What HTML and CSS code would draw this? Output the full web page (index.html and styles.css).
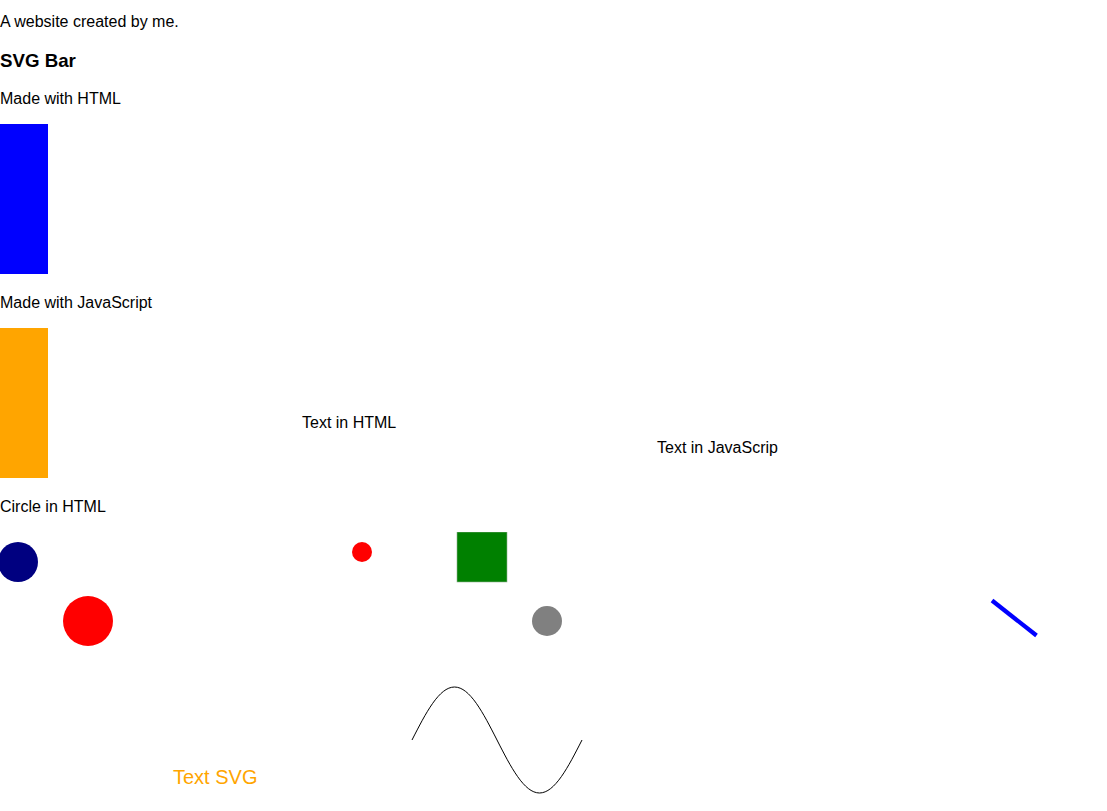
FILE: index.html
```html
<!DOCTYPE html>
<html>
<head>
<meta charset="utf-8">
<title>SVG Bar</title>
<link rel="stylesheet" href="styles.css">
</head>
<body>
<p class="intro">A website created by me.</p>
<h3 class="title">SVG Bar</h3>
<p class="label">Made with HTML</p>
<div class="bar-row">
  <svg class="bar" width="300" height="150" viewBox="0 0 300 150"><rect x="0" y="0" width="48" height="150" fill="blue"/></svg>
</div>
<p class="label">Made with JavaScript</p>
<div class="bar-row">
  <svg class="bar-wide" width="800" height="150" viewBox="0 0 800 150">
    <rect x="0" y="0" width="48" height="150" fill="orange"/>
    <text x="302" y="100" class="svg-label">Text in HTML</text>
    <text x="657" y="125" class="svg-label">Text in JavaScrip</text>
  </svg>
</div>
<p class="label">Circle in HTML</p>
<svg class="canvas" width="1107" height="279" viewBox="0 0 1107 279">
  <circle cx="18" cy="30" r="20" fill="navy"/>
  <circle cx="88" cy="89" r="25" fill="red"/>
  <circle cx="362" cy="20" r="10" fill="red"/>
  <rect x="457" y="0" width="50" height="50" fill="green" stroke="#8fb08f" stroke-width="0.6"/>
  <circle cx="547" cy="89" r="15" fill="gray"/>
  <line x1="992" y1="68.5" x2="1036.5" y2="103.5" stroke="blue" stroke-width="4.3"/>
  <path d="M412 208 C425.86 180.85 439.14 155 454.5 155 C469.86 155 483.14 180.85 497 208 C510.86 235.15 524.14 261 539.5 261 C554.86 261 568.14 235.15 582 208" fill="none" stroke="black" stroke-width="1"/>
  <text x="173" y="252" class="svg-orange">Text SVG</text>
</svg>
</body>
</html>
```

FILE: styles.css
```css
html, body {
  margin: 0;
  padding: 0;
  background: #ffffff;
}
body {
  font-family: "Liberation Sans", Arial, sans-serif;
  font-size: 16px;
  color: #000000;
}
.intro {
  margin: 13px 0 16px 0;
}
.title {
  font-size: 18.72px;
  font-weight: bold;
  margin: 18.72px 0;
}
.label {
  margin: 16px 0;
}
.bar-row {
  margin: 0;
}
.bar, .bar-wide {
  vertical-align: baseline;
}
.svg-label {
  font-family: "Liberation Sans", Arial, sans-serif;
  font-size: 16px;
  fill: #000000;
}
.svg-orange {
  font-family: "Liberation Sans", Arial, sans-serif;
  font-size: 20px;
  fill: orange;
}
.canvas {
  display: block;
}
```
